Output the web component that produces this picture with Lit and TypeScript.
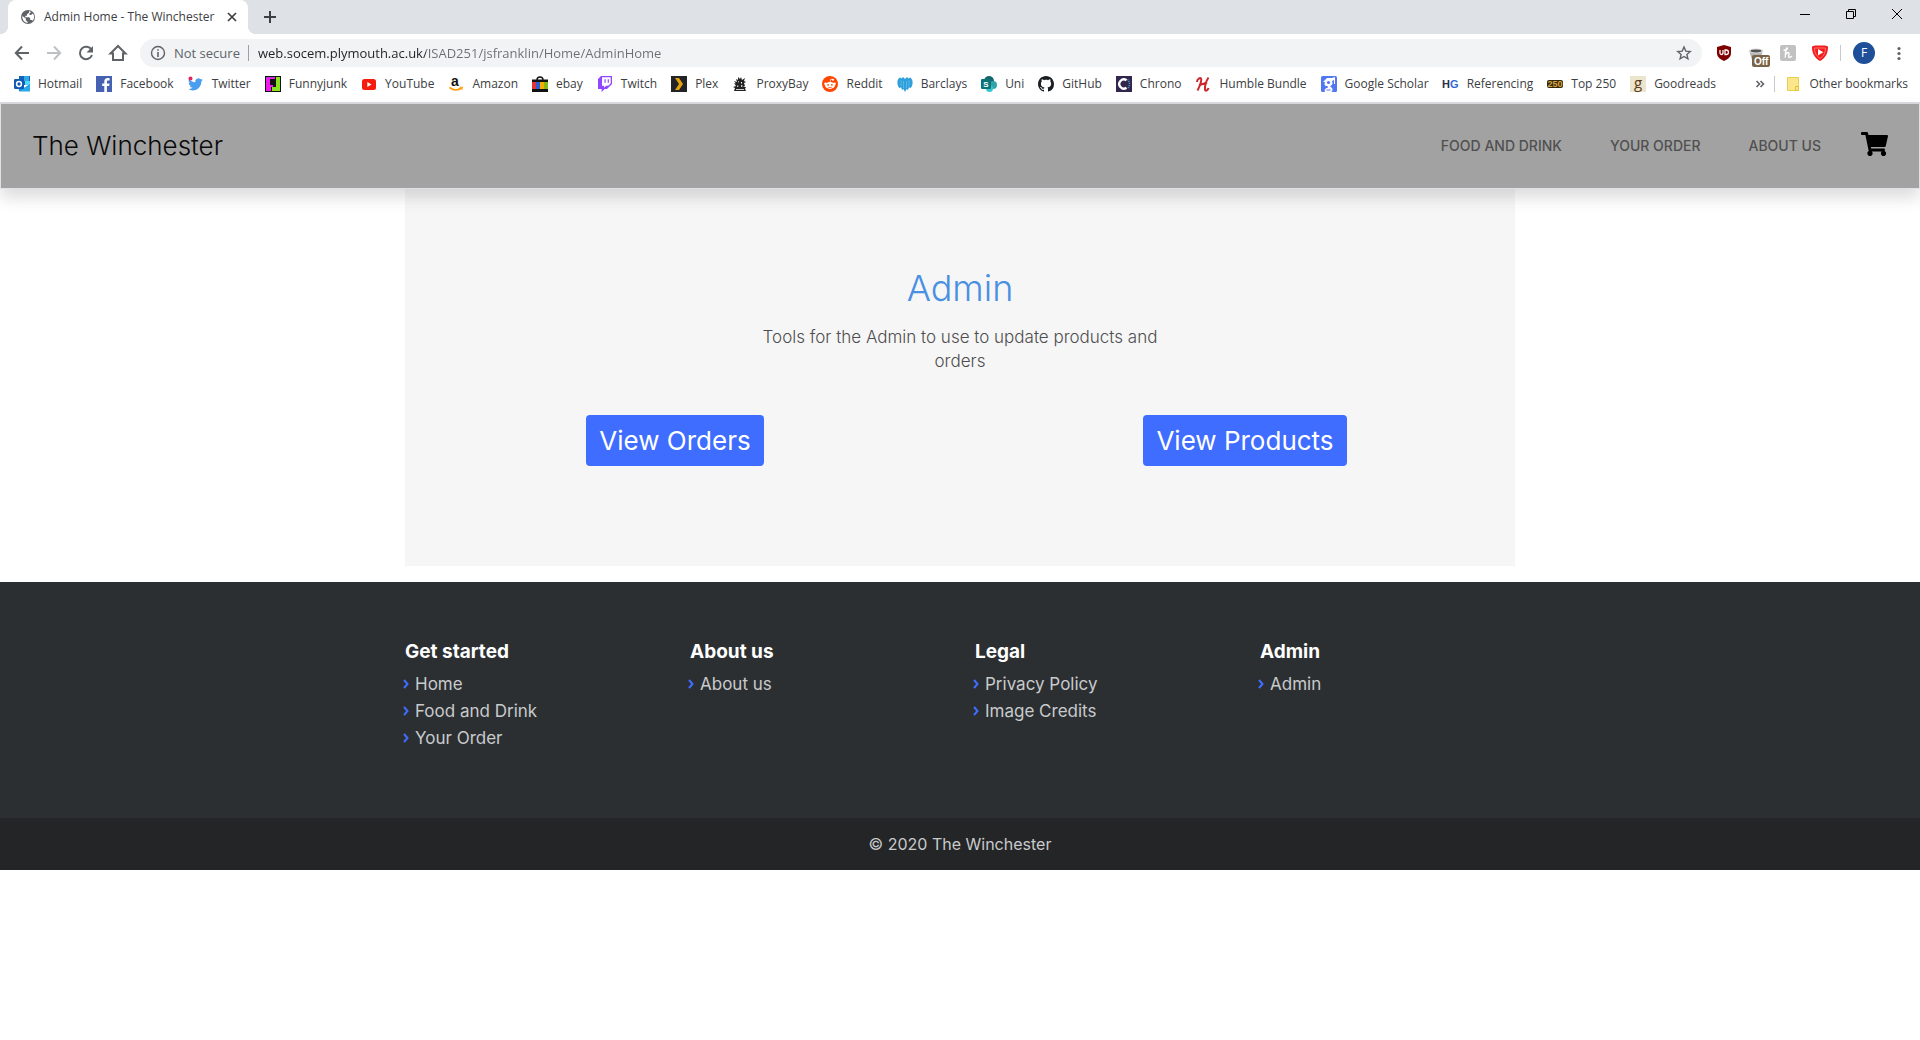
import { LitElement, html, svg, css, TemplateResult } from "lit";
import { customElement } from "lit/decorators.js";

type Drawing = TemplateResult;

const icon = (box: string, body: Drawing, cls = "icon") =>
  html`<svg class=${cls} viewBox=${box} aria-hidden="true">${body}</svg>`;

/* Favicons, each drawn on a 16 x 16 grid. */
const marks: Record<string, Drawing> = {
  hotmail: svg`<path fill="#1066b5" d="M5 0h11v9H5z"/><path fill="#32a9e7" d="M10 0h5v5h-5z"/><path fill="#50d9ff" d="M11 5h5v4h-5z"/><path fill="#1490df" d="M4 9l6 3 6-4v7H5z"/><path fill="#28a8ea" d="M5 15.500L16 8v7.500z"/><rect x="0" y="3" width="10" height="10" rx="1" fill="#0f5bb5"/><circle cx="5" cy="8" r="2.400" fill="none" stroke="#fff" stroke-width="1.500"/>`,
  facebook: svg`<path fill="#4661b1" d="M0 0h16v16H0z"/><path fill="#fff" d="M8.300 16V10H6.200V7.500h2.100V5.600c0-2.300 1.300-3.500 3.400-3.500.9 0 1.600.1 1.900.1v2.200h-1.400c-1 0-1.300.5-1.300 1.300v1.800h2.600l-.3 2.500h-2.300v6z"/>`,
  twitter: svg`<path fill="#4a9ef0" transform="translate(0 1) scale(.62)" d="M23.950 4.570a10 10 0 0 1-2.820.77 4.960 4.960 0 0 0 2.160-2.720c-.95.550-2 .96-3.130 1.180a4.920 4.920 0 0 0-8.380 4.480C7.690 8.090 4.070 6.130 1.640 3.160a4.820 4.820 0 0 0-.67 2.480c0 1.710.87 3.210 2.190 4.100a4.900 4.900 0 0 1-2.230-.62v.06a4.920 4.920 0 0 0 3.950 4.830 5 5 0 0 1-2.210.08 4.940 4.940 0 0 0 4.600 3.420A9.870 9.870 0 0 1 0 19.540a13.990 13.990 0 0 0 7.550 2.210c9.050 0 14-7.500 14-13.980l-.02-.64a9.940 9.940 0 0 0 2.420-2.560z"/><circle cx="2.500" cy="2.500" r="2" fill="#e0245e"/>`,
  funny: svg`<path fill="#111" d="M0 0h16v16H0z"/><path fill="#f31af0" d="M1 1h9v2H5v6h3v2H6v4H1z"/><path fill="#8be01f" d="M11 1h4v14H7v-4h4z"/><path fill="#b43bd0" d="M1 1h9v1H1z"/>`,
  youtube: svg`<rect x="1" y="3" width="14" height="11" rx="2.500" fill="#f61c0d"/><path fill="#fff" d="M6.300 6v5l4.200-2.500z"/>`,
  amazon: svg`<text x="3" y="10" font-family="Liberation Sans, sans-serif" font-size="14" font-weight="700" fill="#111">a</text><path d="M1.500 11.500c4 3 8.500 3 12 .5" fill="none" stroke="#f90" stroke-width="1.600"/><path d="M11.500 11.300l3-.2-.7 2.800" fill="none" stroke="#f90"/>`,
  ebay: svg`<path d="M5 4a3 3 0 0 1 6 0" fill="none" stroke="#111" stroke-width="1.400"/><path fill="#111" d="M0 3.500h16V6H0zM0 13h16v3H0z"/><path fill="#e53238" d="M0 6h4v7H0z"/><path fill="#2b5fd0" d="M4 6h4v7H4z"/><path fill="#f5af02" d="M8 6h4v7H8z"/><path fill="#86b817" d="M12 6h4v7h-4z"/>`,
  twitch: svg`<path fill="#9146ff" d="M4 0L1 3v10h3.600v3l3-3H10l5-5V0z"/><path fill="#fff" d="M5 1.300h8.700v6L11.300 9.700H9l-2 2v-2H5z"/><path fill="#9146ff" d="M7.500 3.300h1.200v3.500H7.500zM10.700 3.300h1.200v3.500h-1.200z"/>`,
  plex: svg`<path fill="#222326" d="M0 0h16v16H0z"/><path fill="#e5a00d" d="M4 2h4l4 6-4 6H4l4-6z"/>`,
  bay: svg`<path fill="#222" d="M6 1l2 2 1-2 1 3 3-2-1 3 2 1-2 1 1 3-2 1h3l-1 2 1 2H2l1-3-2-1 3-1-2-3 2 .5L2 5l3 1-1-3 2 1z"/><path fill="#fff" d="M6 5l1 .8-1 1zM9 6h1v1.500H9zM5 9.500l2 .5-2 1zM9 9l2 1-2 1zM4 13h8v.7H4z"/>`,
  reddit: svg`<circle cx="8" cy="8" r="8" fill="#ff4500"/><ellipse cx="8" cy="9.400" rx="5" ry="3.500" fill="#fff"/><circle cx="3.400" cy="7.700" r="1.200" fill="#fff"/><circle cx="12.600" cy="7.700" r="1.200" fill="#fff"/><circle cx="11" cy="3.700" r="1" fill="#fff"/><path d="M8 6.200l.8-3 2.200.5" fill="none" stroke="#fff" stroke-width=".7"/><circle cx="6.100" cy="8.800" r=".9" fill="#ff4500"/><circle cx="9.900" cy="8.800" r=".9" fill="#ff4500"/><path d="M5.900 11c1.200.8 3 .8 4.200 0" fill="none" stroke="#ff4500" stroke-width=".7"/>`,
  barclays: svg`<path fill="#2f9fdb" d="M8 3L6 1 4.500 2.500 3 1.500C1 2.500 0 5 .5 8c.4 2.300 1.500 4 2.500 4.300L4 11l1 3 1.500-1L8 16l1.500-3 1.500 1 1-3 1 1.300c1-.3 2.100-2 2.500-4.300.5-3-.5-5.500-2.500-6.500l-1.500 1L10 1z"/><path d="M4 4v6M6.500 5v7M9.500 5v7M12 4v6" stroke="#65c3ef" stroke-width=".7"/>`,
  uni: svg`<circle cx="8" cy="5" r="5" fill="#14666b"/><circle cx="12" cy="9" r="4" fill="#30a5a9"/><circle cx="8.500" cy="12.500" r="3.500" fill="#37c6d0"/><rect y="3" width="10" height="10" rx="1" fill="#0b7379"/><text x="2.200" y="11" font-family="Liberation Sans, sans-serif" font-size="8" font-weight="700" fill="#fff">S</text>`,
  github: svg`<path fill="#1b1f23" fill-rule="evenodd" d="M8 0C3.580 0 0 3.580 0 8c0 3.540 2.290 6.530 5.470 7.590.4.070.55-.17.550-.38 0-.19-.01-.82-.01-1.490-2.010.37-2.530-.49-2.690-.94-.09-.23-.48-.94-.82-1.130-.28-.15-.68-.52-.01-.53.630-.01 1.080.58 1.230.82.720 1.210 1.870.87 2.330.66.070-.52.280-.87.510-1.070-1.780-.2-3.640-.89-3.640-3.950 0-.87.310-1.590.82-2.150-.08-.2-.36-1.020.08-2.120 0 0 .67-.21 2.200.82.640-.18 1.320-.27 2-.27s1.360.09 2 .27c1.530-1.040 2.200-.82 2.200-.82.440 1.100.16 1.920.08 2.120.51.560.82 1.270.82 2.150 0 3.070-1.870 3.750-3.650 3.950.29.250.54.730.54 1.480 0 1.070-.01 1.930-.01 2.200 0 .21.150.46.550.38A8.010 8.010 0 0 0 16 8c0-4.420-3.580-8-8-8z"/>`,
  chrono: svg`<path fill="#33264d" d="M0 0h16v16H0z"/><path d="M10.500 4.200a4.600 4.600 0 1 0 0 7.600" fill="none" stroke="#fff" stroke-width="2.400"/><path d="M11.500 3.500a6 6 0 0 1 0 9" fill="none" stroke="#4a9cc0" stroke-width="1.500" stroke-dasharray="1 1"/>`,
  humble: svg`<path d="M2 6c0-3 3-4.500 4-3.500S5 10 2.500 14.500M13.500 1.500C11 5 9.500 11 10 13.500s3 .5 3.500-1.500M4 9c3-1 5-1 8-2.500" fill="none" stroke="#cb272c" stroke-width="2"/>`,
  scholar: svg`<rect width="16" height="16" rx="1.500" fill="#5078f0"/><path fill="#fff" d="M2 6l4-4h5l3-1v7h-1V4l-2 1c1 2 .5 3.500-1 4.500s0 1.500 1 2.500.5 4-1 4H4c-1-2 0-4 3-4-.8-1-.5-1.500-.3-2C3.500 10.500 3 8 4 6z"/><circle cx="7.500" cy="6.500" r="1.600" fill="#5078f0"/><path fill="#5078f0" d="M5.500 13.500h4v1h-4z"/>`,
  hg: svg`<text x="-1" y="12" font-family="Liberation Sans, sans-serif" font-size="11" font-weight="700" fill="#2a2f45">H<tspan fill="#3367d6">G</tspan></text>`,
  top: svg`<rect y="4" width="16" height="8" rx="2" fill="#33290f"/><text x=".5" y="11" font-family="Liberation Sans, sans-serif" font-size="9" font-weight="700" fill="#d9a441">250</text>`,
  good: svg`<path fill="#ebe5cd" d="M0 0h16v16H0z"/><text x="4" y="11.500" font-family="Open Sans, sans-serif" font-size="15" fill="#5d3a17">g</text>`,
};

const bookmarks: [string, string][] = [
  ["hotmail", "Hotmail"], ["facebook", "Facebook"], ["twitter", "Twitter"],
  ["funny", "Funnyjunk"], ["youtube", "YouTube"], ["amazon", "Amazon"],
  ["ebay", "ebay"], ["twitch", "Twitch"], ["plex", "Plex"],
  ["bay", "ProxyBay"], ["reddit", "Reddit"], ["barclays", "Barclays"],
  ["uni", "Uni"], ["github", "GitHub"], ["chrono", "Chrono"],
  ["humble", "Humble Bundle"], ["scholar", "Google Scholar"],
  ["hg", "Referencing"], ["top", "Top 250"], ["good", "Goodreads"],
];

@customElement("browser-chrome")
export class BrowserChrome extends LitElement {
  static styles = css`
    :host { display: block; font-family: "Open Sans", "Noto Sans", sans-serif; font-size: 12px; color: #3c4043; }
    * { box-sizing: border-box; }
    button { border: 0; padding: 0; background: none; font: inherit; color: inherit; display: flex; align-items: center; justify-content: center; flex: none; }
    svg { display: block; flex: none; }
    .icon { width: 16px; height: 16px; overflow: visible; }
    .strip { display: flex; height: 34px; background: #dee1e6; padding-left: 8px; }
    .tab { position: relative; display: flex; align-items: center; width: 240px; padding: 0 8px 0 12px; background: #fff; border-radius: 8px 8px 0 0; }
    .tab::before, .tab::after { content: ""; position: absolute; bottom: 0; width: 8px; height: 8px; }
    .tab::before { left: -8px; background: radial-gradient(circle at 0 0, transparent 8px, #fff 8px); }
    .tab::after { right: -8px; background: radial-gradient(circle at 100% 0, transparent 8px, #fff 8px); }
    .title { flex: 1; margin-left: 8px; white-space: nowrap; }
    .close { width: 16px; height: 16px; }
    .add { width: 28px; margin-left: 8px; }
    .window { display: flex; margin-left: auto; height: 28px; }
    .window button { width: 46px; }
    .bar { display: flex; align-items: center; height: 36px; padding: 0 13px 0 12px; }
    .nav { display: flex; gap: 12px; margin-right: 12px; }
    .nav button { width: 20px; height: 28px; }
    .icon20 { width: 20px; height: 20px; }
    .omni { display: flex; align-items: center; flex: 1; height: 28px; margin-top: 2px; padding: 0 10px; border-radius: 14px; background: #f1f3f4; font-size: 13px; }
    .secure { display: flex; align-items: center; gap: 8px; color: #5f6368; white-space: nowrap; }
    .rule { width: 1px; height: 16px; background: #9aa0a6; margin: 0 9px 0 8px; }
    .url { flex: 1; min-width: 0; border: 0; outline: 0; padding: 0; font: inherit; color: transparent; background: linear-gradient(90deg, #202124 168px, #6b6f74 168px) text; }
    .tools { display: flex; align-items: center; gap: 16px; margin: 2px 0 0 14px; }
    .tools .rule { background: #c8cacd; margin: 0 -4px; }
    .avatar { width: 22px; height: 22px; border-radius: 50%; background: #1f4f99; color: #fff; }
    .marks { display: flex; align-items: center; height: 32px; padding: 0 12px 4px 14px; gap: 14px; white-space: nowrap; }
    .marks a { display: flex; align-items: center; gap: 8px; color: inherit; text-decoration: none; }
    .more { margin-left: auto; }
    .marks .rule { background: #c8cacd; margin: 0 -4px 0 -8px; }
    .edge { height: 2px; background: #dadce0; }
  `;

  render() {
    return html`
      <div class="strip">
        <div class="tab">
          ${icon("0 0 16 16", svg`<circle cx="8" cy="8" r="7" fill="#5f6368"/><path fill="#fff" d="M2.300 7l3.500 2.500v1.700L7.700 13v1A6 6 0 0 1 2.300 7zM9 2v1.700L7 5.300v1.500H5.300v1.500h3.900l1 1.200v1.500h1.500l1 .8a6 6 0 0 0 .2-7.200L11 6H9.500V4.500L11 3z"/>`)}
          <span class="title">Admin Home - The Winchester</span>
          <button class="close" aria-label="Close tab">${icon("0 0 16 16", svg`<path d="M4 4l8 8M12 4l-8 8" stroke="#3c4043" stroke-width="1.700"/>`)}</button>
        </div>
        <button class="add" aria-label="New tab">${icon("0 0 16 16", svg`<path d="M8 2v12M2 8h12" stroke="#3c4043" stroke-width="2"/>`)}</button>
        <div class="window">
          <button aria-label="Minimise">${icon("0 0 16 16", svg`<path d="M3 8.500h10" stroke="#000"/>`)}</button>
          <button aria-label="Restore">${icon("0 0 16 16", svg`<path d="M3.500 5.500h7v7h-7zM5.500 5.500v-2h7v7h-2" fill="none" stroke="#000"/>`)}</button>
          <button aria-label="Close window">${icon("0 0 16 16", svg`<path d="M3 3l10 10M13 3L3 13" stroke="#000"/>`)}</button>
        </div>
      </div>
      <div class="bar">
        <div class="nav">
          <button aria-label="Back">${icon("0 0 20 20", svg`<path d="M17 11H4M10 4.500L3.800 11l6.200 6.500" fill="none" stroke="#5f6368" stroke-width="2"/>`, "icon20")}</button>
          <button aria-label="Forward">${icon("0 0 20 20", svg`<path d="M3 11h13M10 4.500l6.200 6.500-6.200 6.500" fill="none" stroke="#bdc1c6" stroke-width="2"/>`, "icon20")}</button>
          <button aria-label="Reload">${icon("0 0 20 20", svg`<path d="M15.500 7.800A6.200 6.200 0 1 0 16 13" fill="none" stroke="#5f6368" stroke-width="2"/><path fill="#5f6368" d="M17 4v6.500h-6.500z"/>`, "icon20")}</button>
          <button aria-label="Home">${icon("0 0 20 20", svg`<path d="M2.500 11.500L10 4l7.500 7.500H15V18H5v-6.500z" fill="none" stroke="#5f6368" stroke-width="2"/>`, "icon20")}</button>
        </div>
        <div class="omni">
          <div class="secure">
            ${icon("0 0 16 16", svg`<circle cx="8" cy="8" r="6.500" fill="none" stroke="#5f6368" stroke-width="1.400"/><path d="M8 7v5M8 4.200v1.600" stroke="#5f6368" stroke-width="1.600"/>`)}
            <span>Not secure</span>
          </div>
          <span class="rule"></span>
          <input class="url" type="text" aria-label="Address" .value=${"web.socem.plymouth.ac.uk/ISAD251/jsfranklin/Home/AdminHome"} />
          <button aria-label="Bookmark this page">${icon("0 0 16 16", svg`<path d="M8 2l1.800 4.100 4.400.4-3.300 2.900 1 4.400L8 11.500l-3.900 2.300 1-4.400-3.300-2.900 4.400-.4z" fill="none" stroke="#5f6368" stroke-width="1.400"/>`)}</button>
        </div>
        <div class="tools">
          <button aria-label="uBlock">${icon("0 0 16 16", svg`<path fill="#800000" d="M8 0l7 2v6c0 4-3 6-7 8-4-2-7-4-7-8V2z"/><path d="M4 5v3a1.500 1.500 0 0 0 3 0V5M9 5v4.500h1.200a2 2 0 0 0 0-4.500z" fill="none" stroke="#fff" stroke-width="1.300"/>`)}</button>
          <button aria-label="Extension, off">${icon("0 0 16 16", svg`<path fill="#b4b4b4" d="M1 5.500h14L12 15H4z"/><ellipse cx="8" cy="6" rx="7.500" ry="2.500" fill="#ddd"/><ellipse cx="8" cy="6" rx="5.500" ry="1.400" fill="#555"/><rect x="4" y="10" width="18" height="12" rx="2" fill="#7a6346"/><text x="6" y="20" font-family="Liberation Sans, sans-serif" font-size="10" font-weight="700" fill="#fff">Off</text>`)}</button>
          <button aria-label="Honey">${icon("0 0 16 16", svg`<rect width="16" height="16" rx="2" fill="#c1c1c1"/><path d="M3.500 5.500C6 5 8 3.800 7.300 3S5.300 6 5.300 12.500M5.500 10C6.500 7.500 9 6.500 9 8.500c0 1.500-1 4 .5 4 1 0 1.500-.6 2.500-1.500" fill="none" stroke="#fff" stroke-width="1.400"/>`)}</button>
          <button aria-label="Video extension">${icon("0 0 16 16", svg`<path fill="#f51b1b" d="M0 1.500L3 .5h10l3 1C16 8 14 12.500 8 16 2 12.500 0 8 0 1.500z"/><path fill="none" stroke="#ff8a8a" stroke-width=".8" d="M2.500 3h11c0 4.500-1.500 7.800-5.500 10.500C4 10.800 2.500 7.500 2.500 3z"/><path fill="#fff" d="M6 4v6.500l5.300-3.200z"/>`)}</button>
          <span class="rule"></span>
          <button class="avatar" aria-label="Profile">F</button>
          <button aria-label="Menu">${icon("0 0 16 16", svg`<circle cx="8" cy="3.500" r="1.600" fill="#5f6368"/><circle cx="8" cy="8.500" r="1.600" fill="#5f6368"/><circle cx="8" cy="13.500" r="1.600" fill="#5f6368"/>`)}</button>
        </div>
      </div>
      <nav class="marks" aria-label="Bookmarks">
        ${bookmarks.map(([key, name]) => html`<a href="#">${icon("0 0 16 16", marks[key])}<span>${name}</span></a>`)}
        <button class="more" aria-label="More bookmarks">${icon("0 0 16 16", svg`<path d="M4.500 5l3 3-3 3M8.500 5l3 3-3 3" fill="none" stroke="#5f6368" stroke-width="1.600"/>`)}</button>
        <span class="rule"></span>
        <a href="#">${icon("0 0 16 16", svg`<path d="M2.500 1.500h11v9l-2 4h-9z" fill="#fbe68b" stroke="#e8cf4f"/><path d="M10.500 10.500h3v4h-3z" fill="#fbe68b" stroke="#e0c02c"/>`)}<span>Other bookmarks</span></a>
      </nav>
      <div class="edge"></div>
    `;
  }
}

const columns = [
  { title: "Get started", links: ["Home", "Food and Drink", "Your Order"] },
  { title: "About us", links: ["About us"] },
  { title: "Legal", links: ["Privacy Policy", "Image Credits"] },
  { title: "Admin", links: ["Admin"] },
];

@customElement("app-root")
export class AppRoot extends LitElement {
  static styles = css`
    :host { display: block; font-family: Inter, "Open Sans", sans-serif; font-size: 17px; line-height: 24px; color: #4e4e50; background: #fff; }
    * { box-sizing: border-box; }
    a { color: inherit; text-decoration: none; }
    .header { position: relative; display: flex; align-items: center; height: 85px; padding: 0 31px; background: #a2a2a2; border: 1px solid #dee2e6; border-top: 0; box-shadow: 0 8px 16px rgba(0, 0, 0, 0.15); }
    .brand { font-size: 26px; font-weight: 300; color: #0a0a0a; }
    .menu { display: flex; align-items: center; gap: 48px; margin-left: auto; font-size: 14px; font-weight: 500; color: #505050; text-transform: uppercase; }
    .cart { margin-left: 40px; padding-bottom: 4px; }
    .cart svg { display: block; width: 27px; height: 24px; }
    .container { max-width: 1110px; margin: 0 auto; }
    .panel { margin-bottom: 16px; padding: 76px 0 100px; background: #f6f6f6; text-align: center; }
    h1 { margin: 0 0 14px; font-size: 36px; line-height: 46px; font-weight: 300; color: #4a90e2; }
    .lead { max-width: 430px; margin: 0 auto 42px; font-weight: 300; }
    .actions { display: grid; grid-template-columns: 1fr 1fr; gap: 30px; justify-items: center; }
    .btn { padding: 8px 13px; border-radius: 4px; background: #3e6dff; color: #fff; font-size: 26px; line-height: 35px; }
    .footer { background: #2c2f32; color: #c8cacc; }
    .columns { display: grid; grid-template-columns: repeat(4, 1fr); gap: 30px; padding: 58px 0 67px; }
    h2 { margin: 0 0 6px; font-size: 19px; line-height: 24px; font-weight: 700; color: #fff; }
    ul { list-style: none; margin: 0 0 0 -2px; padding: 0; }
    li { display: flex; align-items: center; gap: 6px; height: 27px; }
    li svg { width: 6px; height: 10px; }
    .legal { padding: 14px; background: #242527; color: #c8cacc; font-size: 16px; text-align: center; }
  `;

  render() {
    return html`
      <browser-chrome></browser-chrome>
      <header class="header">
        <a class="brand" href="#">The Winchester</a>
        <nav class="menu"><a href="#">Food and Drink</a><a href="#">Your Order</a><a href="#">About us</a></nav>
        <a class="cart" href="#" aria-label="Basket"><svg viewBox="0 0 576 512"><path d="M528.120 301.319l47.273-208C578.806 78.301 567.391 64 551.990 64H159.208l-9.166-44.810C147.758 8.021 137.930 0 126.529 0H24C10.745 0 0 10.745 0 24v16c0 13.255 10.745 24 24 24h69.883l70.248 343.435C147.325 417.100 136 435.222 136 456c0 30.928 25.072 56 56 56s56-25.072 56-56c0-15.674-6.447-29.835-16.824-40h209.647C430.447 426.165 424 440.326 424 456c0 30.928 25.072 56 56 56s56-25.072 56-56c0-22.172-12.888-41.332-31.579-50.405l5.517-24.276c3.413-15.018-8.002-29.319-23.403-29.319H218.117l-6.545-32h293.145c11.206 0 20.920-7.754 23.403-18.681z"/></svg></a>
      </header>
      <main class="container panel">
        <h1>Admin</h1>
        <p class="lead">Tools for the Admin to use to update products and orders</p>
        <div class="actions">
          <a class="btn" href="#">View Orders</a>
          <a class="btn" href="#">View Products</a>
        </div>
      </main>
      <footer class="footer">
        <div class="container columns">
          ${columns.map((c) => html`<section>
            <h2>${c.title}</h2>
            <ul>${c.links.map((l) => html`<li><svg viewBox="0 0 6 10" aria-hidden="true"><path d="M1 1l3.500 4L1 9" fill="none" stroke="#3e6dff" stroke-width="2"/></svg><a href="#">${l}</a></li>`)}</ul>
          </section>`)}
        </div>
        <div class="legal">© 2020 The Winchester</div>
      </footer>
    `;
  }
}
